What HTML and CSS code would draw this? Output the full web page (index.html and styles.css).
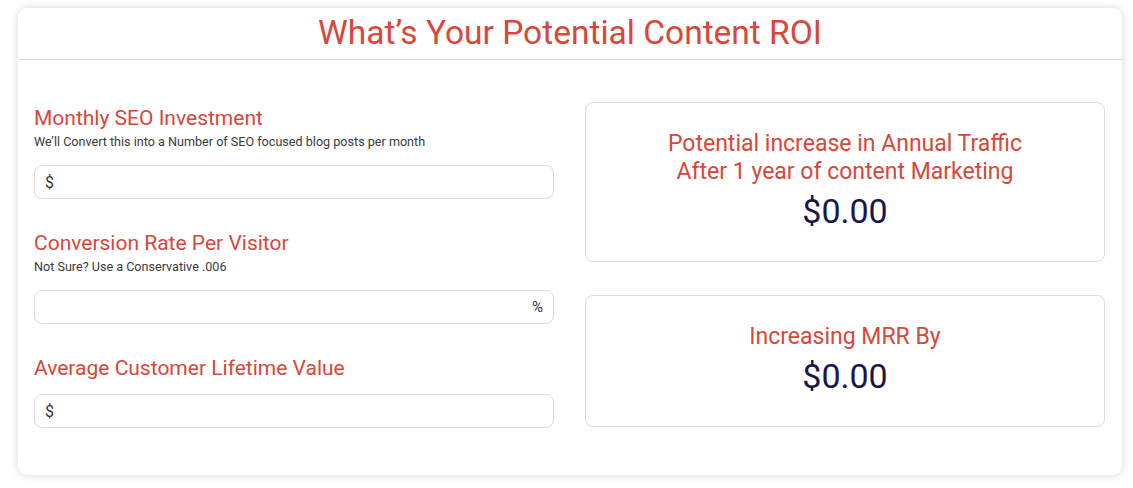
FILE: index.html
```html
<!DOCTYPE html>
<html>
<head>
<meta charset="utf-8">
<link rel="stylesheet" href="styles.css">
</head>
<body>
<div class="card">
  <div class="card-header">
    <h1 class="title">What’s Your Potential Content ROI</h1>
  </div>
  <div class="card-body">
    <div class="form-col">
      <div class="field">
        <div class="label">Monthly SEO Investment</div>
        <div class="hint">We’ll Convert this into a Number of SEO focused blog posts per month</div>
        <div class="input"><span class="prefix">$</span></div>
      </div>
      <div class="field">
        <div class="label">Conversion Rate Per Visitor</div>
        <div class="hint">Not Sure? Use a Conservative .006</div>
        <div class="input input-suffix"><span class="suffix">%</span></div>
      </div>
      <div class="field">
        <div class="label">Average Customer Lifetime Value</div>
        <div class="input"><span class="prefix">$</span></div>
      </div>
    </div>
    <div class="result-col">
      <div class="result">
        <div class="result-title">Potential increase in Annual Traffic<br>After 1 year of content Marketing</div>
        <div class="result-value">$0.00</div>
      </div>
      <div class="result">
        <div class="result-title">Increasing MRR By</div>
        <div class="result-value">$0.00</div>
      </div>
    </div>
  </div>
</div>
</body>
</html>
```
FILE: styles.css
```css
* { box-sizing: border-box; }
html, body { margin: 0; padding: 0; }
body {
  background: #ffffff;
  font-family: Roboto, "Liberation Sans", Arial, sans-serif;
  padding: 8px 11px 13px 18px;
}
.card {
  width: 1104px;
  height: 467px;
  background: #fff;
  border-radius: 9px;
  box-shadow: 0 0 8px rgba(0,0,0,0.16);
}
.card-header {
  height: 52px;
  border-bottom: 1px solid #dcdcdc;
  display: flex;
  align-items: center;
  justify-content: center;
}
.title {
  margin: 0;
  font-weight: 400;
  font-size: 33.5px;
  line-height: 40px;
  color: #d7473a;
  padding-bottom: 2px;
}
.card-body {
  display: grid;
  grid-template-columns: 520px 520px;
  column-gap: 31px;
  padding: 42px 17px 0 16px;
}
.form-col {
  display: flex;
  flex-direction: column;
  gap: 32px;
  padding-top: 4px;
}
.field { display: flex; flex-direction: column; }
.label {
  font-size: 21px;
  line-height: 24px;
  color: #d7473a;
  margin-bottom: 4px;
}
.hint {
  font-size: 12.6px;
  line-height: 16px;
  color: #3a3a3a;
  margin-bottom: 15px;
}
.label + .input { margin-top: 10px; }
.input {
  height: 34px;
  border: 1px solid #dcdcdc;
  border-radius: 8px;
  display: flex;
  align-items: center;
  padding: 0 10px;
  font-size: 16px;
  color: #333;
}
.input-suffix { justify-content: flex-end; }
.suffix { font-size: 15px; }
.result-col {
  display: flex;
  flex-direction: column;
  gap: 33px;
}
.result {
  border: 1px solid #dcdcdc;
  border-radius: 8px;
  padding: 27px 10px 28px;
  text-align: center;
}
.result-title {
  font-size: 23px;
  line-height: 28px;
  color: #d7473a;
}
.result-value {
  font-size: 34px;
  line-height: 44px;
  margin-top: 3px;
  color: #17174a;
}
```
